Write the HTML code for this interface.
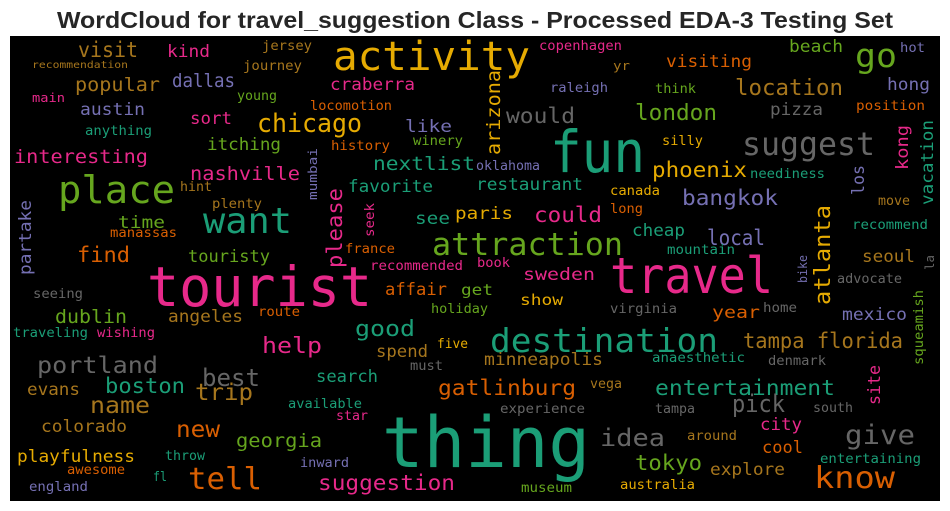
<!DOCTYPE html>
<html><head><meta charset="utf-8"><style>
html,body{margin:0;padding:0;background:#fff;width:950px;height:511px;overflow:hidden}
svg{display:block}
.w{font-family:"DejaVu Sans Mono","Liberation Mono",monospace}
.T{fill:#1b9e77}.O{fill:#d95f02}.P{fill:#7570b3}.K{fill:#e7298a}.G{fill:#66a61e}.Y{fill:#e6ab02}.B{fill:#a6761d}.A{fill:#666666}
</style></head><body>
<svg width="950" height="511" viewBox="0 0 950 511" xmlns="http://www.w3.org/2000/svg">
<text x="475" y="28" text-anchor="middle" font-family="Liberation Sans, sans-serif" font-weight="bold" font-size="23" fill="#262626" textLength="836" lengthAdjust="spacingAndGlyphs">WordCloud for travel_suggestion Class - Processed EDA-3 Testing Set</text>
<rect x="10" y="36" width="930" height="465" fill="#000"/>
<g class="w">
<text class="Y" x="333" y="70" font-size="40" textLength="197" lengthAdjust="spacingAndGlyphs">activity</text>
<text class="T" x="550" y="172" font-size="58" textLength="95" lengthAdjust="spacingAndGlyphs">fun</text>
<text class="T" x="382" y="467" font-size="70" textLength="208" lengthAdjust="spacingAndGlyphs">thing</text>
<text class="K" x="147" y="306" font-size="55" textLength="225" lengthAdjust="spacingAndGlyphs">tourist</text>
<text class="K" x="610" y="293" font-size="50" textLength="163" lengthAdjust="spacingAndGlyphs">travel</text>
<text class="G" x="58" y="203" font-size="38" textLength="117" lengthAdjust="spacingAndGlyphs">place</text>
<text class="T" x="203" y="233" font-size="36" textLength="89" lengthAdjust="spacingAndGlyphs">want</text>
<text class="T" x="490" y="352" font-size="33" textLength="228" lengthAdjust="spacingAndGlyphs">destination</text>
<text class="G" x="432" y="255" font-size="31" textLength="191" lengthAdjust="spacingAndGlyphs">attraction</text>
<text class="A" x="742" y="155" font-size="32" textLength="133" lengthAdjust="spacingAndGlyphs">suggest</text>
<text class="G" x="855" y="67" font-size="33" textLength="42" lengthAdjust="spacingAndGlyphs">go</text>
<text class="O" x="814" y="488" font-size="30" textLength="81" lengthAdjust="spacingAndGlyphs">know</text>
<text class="O" x="188" y="489" font-size="30" textLength="74" lengthAdjust="spacingAndGlyphs">tell</text>
<text class="A" x="845" y="444" font-size="27" textLength="70" lengthAdjust="spacingAndGlyphs">give</text>
<text class="A" x="600" y="446" font-size="24" textLength="65" lengthAdjust="spacingAndGlyphs">idea</text>
<text class="Y" x="257" y="132" font-size="26" textLength="105" lengthAdjust="spacingAndGlyphs">chicago</text>
<text class="B" x="735" y="95" font-size="22" textLength="108" lengthAdjust="spacingAndGlyphs">location</text>
<text class="G" x="635" y="120" font-size="22" textLength="82" lengthAdjust="spacingAndGlyphs">london</text>
<text class="Y" x="652" y="177" font-size="21" textLength="95" lengthAdjust="spacingAndGlyphs">phoenix</text>
<text class="P" x="682" y="205" font-size="21" textLength="96" lengthAdjust="spacingAndGlyphs">bangkok</text>
<text class="K" x="534" y="222" font-size="21" textLength="68" lengthAdjust="spacingAndGlyphs">could</text>
<text class="P" x="707" y="245" font-size="21" textLength="58" lengthAdjust="spacingAndGlyphs">local</text>
<text class="T" x="632" y="236" font-size="17" textLength="53" lengthAdjust="spacingAndGlyphs">cheap</text>
<text class="A" x="506" y="123" font-size="21" textLength="69" lengthAdjust="spacingAndGlyphs">would</text>
<text class="O" x="666" y="67" font-size="17" textLength="86" lengthAdjust="spacingAndGlyphs">visiting</text>
<text class="G" x="789" y="52" font-size="17" textLength="54" lengthAdjust="spacingAndGlyphs">beach</text>
<text class="P" x="900" y="52" font-size="13" textLength="25" lengthAdjust="spacingAndGlyphs">hot</text>
<text class="K" x="539" y="50" font-size="13" textLength="83" lengthAdjust="spacingAndGlyphs">copenhagen</text>
<text class="B" x="613" y="70" font-size="12" textLength="17" lengthAdjust="spacingAndGlyphs">yr</text>
<text class="P" x="550" y="92" font-size="13" textLength="58" lengthAdjust="spacingAndGlyphs">raleigh</text>
<text class="G" x="655" y="93" font-size="13" textLength="41" lengthAdjust="spacingAndGlyphs">think</text>
<text class="P" x="887" y="90" font-size="17" textLength="43" lengthAdjust="spacingAndGlyphs">hong</text>
<text class="A" x="770" y="115" font-size="17" textLength="53" lengthAdjust="spacingAndGlyphs">pizza</text>
<text class="O" x="856" y="110" font-size="13" textLength="69" lengthAdjust="spacingAndGlyphs">position</text>
<text class="Y" x="662" y="145" font-size="13" textLength="41" lengthAdjust="spacingAndGlyphs">silly</text>
<text class="T" x="750" y="178" font-size="13" textLength="75" lengthAdjust="spacingAndGlyphs">neediness</text>
<text class="Y" x="610" y="195" font-size="13" textLength="50" lengthAdjust="spacingAndGlyphs">canada</text>
<text class="O" x="610" y="213" font-size="13" textLength="33" lengthAdjust="spacingAndGlyphs">long</text>
<text class="B" x="878" y="205" font-size="13" textLength="32" lengthAdjust="spacingAndGlyphs">move</text>
<text class="T" x="852" y="229" font-size="13" textLength="76" lengthAdjust="spacingAndGlyphs">recommend</text>
<text class="T" x="667" y="254" font-size="13" textLength="68" lengthAdjust="spacingAndGlyphs">mountain</text>
<text class="P" x="476" y="170" font-size="13" textLength="64" lengthAdjust="spacingAndGlyphs">oklahoma</text>
<text class="T" x="476" y="190" font-size="17" textLength="107" lengthAdjust="spacingAndGlyphs">restaurant</text>
<text class="Y" x="455" y="219" font-size="17" textLength="58" lengthAdjust="spacingAndGlyphs">paris</text>
<text class="B" x="862" y="262" font-size="17" textLength="53" lengthAdjust="spacingAndGlyphs">seoul</text>
<text class="A" x="837" y="283" font-size="13" textLength="65" lengthAdjust="spacingAndGlyphs">advocate</text>
<text class="P" x="842" y="320" font-size="17" textLength="65" lengthAdjust="spacingAndGlyphs">mexico</text>
<text class="A" x="763" y="312" font-size="13" textLength="34" lengthAdjust="spacingAndGlyphs">home</text>
<text class="O" x="712" y="318" font-size="17" textLength="48" lengthAdjust="spacingAndGlyphs">year</text>
<text class="A" x="610" y="313" font-size="13" textLength="67" lengthAdjust="spacingAndGlyphs">virginia</text>
<text class="Y" x="520" y="305" font-size="15" textLength="43" lengthAdjust="spacingAndGlyphs">show</text>
<text class="K" x="523" y="280" font-size="17" textLength="72" lengthAdjust="spacingAndGlyphs">sweden</text>
<text class="K" x="477" y="267" font-size="13" textLength="33" lengthAdjust="spacingAndGlyphs">book</text>
<text class="K" x="370" y="270" font-size="13" textLength="93" lengthAdjust="spacingAndGlyphs">recommended</text>
<text class="G" x="461" y="295" font-size="15" textLength="32" lengthAdjust="spacingAndGlyphs">get</text>
<text class="O" x="385" y="295" font-size="17" textLength="62" lengthAdjust="spacingAndGlyphs">affair</text>
<text class="G" x="431" y="313" font-size="13" textLength="57" lengthAdjust="spacingAndGlyphs">holiday</text>
<text class="B" x="743" y="348" font-size="21" textLength="160" lengthAdjust="spacingAndGlyphs">tampa florida</text>
<text class="B" x="484" y="365" font-size="17" textLength="119" lengthAdjust="spacingAndGlyphs">minneapolis</text>
<text class="T" x="652" y="362" font-size="13" textLength="93" lengthAdjust="spacingAndGlyphs">anaesthetic</text>
<text class="A" x="768" y="365" font-size="13" textLength="58" lengthAdjust="spacingAndGlyphs">denmark</text>
<text class="T" x="655" y="395" font-size="21" textLength="180" lengthAdjust="spacingAndGlyphs">entertainment</text>
<text class="B" x="590" y="388" font-size="13" textLength="32" lengthAdjust="spacingAndGlyphs">vega</text>
<text class="O" x="438" y="395" font-size="21" textLength="138" lengthAdjust="spacingAndGlyphs">gatlinburg</text>
<text class="A" x="500" y="413" font-size="13" textLength="85" lengthAdjust="spacingAndGlyphs">experience</text>
<text class="A" x="655" y="413" font-size="13" textLength="40" lengthAdjust="spacingAndGlyphs">tampa</text>
<text class="A" x="732" y="412" font-size="24" textLength="53" lengthAdjust="spacingAndGlyphs">pick</text>
<text class="A" x="813" y="412" font-size="13" textLength="40" lengthAdjust="spacingAndGlyphs">south</text>
<text class="K" x="760" y="430" font-size="17" textLength="42" lengthAdjust="spacingAndGlyphs">city</text>
<text class="B" x="687" y="440" font-size="13" textLength="50" lengthAdjust="spacingAndGlyphs">around</text>
<text class="O" x="762" y="453" font-size="17" textLength="41" lengthAdjust="spacingAndGlyphs">cool</text>
<text class="G" x="635" y="470" font-size="21" textLength="67" lengthAdjust="spacingAndGlyphs">tokyo</text>
<text class="B" x="710" y="475" font-size="17" textLength="75" lengthAdjust="spacingAndGlyphs">explore</text>
<text class="T" x="820" y="463" font-size="13" textLength="101" lengthAdjust="spacingAndGlyphs">entertaining</text>
<text class="Y" x="620" y="489" font-size="13" textLength="75" lengthAdjust="spacingAndGlyphs">australia</text>
<text class="G" x="521" y="492" font-size="13" textLength="51" lengthAdjust="spacingAndGlyphs">museum</text>

<text class="B" x="78" y="57" font-size="21" textLength="60" lengthAdjust="spacingAndGlyphs">visit</text>
<text class="K" x="167" y="57" font-size="17" textLength="43" lengthAdjust="spacingAndGlyphs">kind</text>
<text class="B" x="262" y="50" font-size="13" textLength="50" lengthAdjust="spacingAndGlyphs">jersey</text>
<text class="B" x="32" y="68" font-size="10" textLength="96" lengthAdjust="spacingAndGlyphs">recommendation</text>
<text class="B" x="243" y="70" font-size="13" textLength="59" lengthAdjust="spacingAndGlyphs">journey</text>
<text class="B" x="75" y="91" font-size="19" textLength="85" lengthAdjust="spacingAndGlyphs">popular</text>
<text class="P" x="172" y="87" font-size="19" textLength="63" lengthAdjust="spacingAndGlyphs">dallas</text>
<text class="K" x="330" y="90" font-size="17" textLength="85" lengthAdjust="spacingAndGlyphs">craberra</text>
<text class="K" x="32" y="102" font-size="12" textLength="33" lengthAdjust="spacingAndGlyphs">main</text>
<text class="G" x="237" y="100" font-size="13" textLength="40" lengthAdjust="spacingAndGlyphs">young</text>
<text class="O" x="310" y="110" font-size="13" textLength="82" lengthAdjust="spacingAndGlyphs">locomotion</text>
<text class="P" x="80" y="115" font-size="17" textLength="65" lengthAdjust="spacingAndGlyphs">austin</text>
<text class="K" x="190" y="124" font-size="17" textLength="42" lengthAdjust="spacingAndGlyphs">sort</text>
<text class="P" x="405" y="132" font-size="17" textLength="47" lengthAdjust="spacingAndGlyphs">like</text>
<text class="T" x="85" y="135" font-size="13" textLength="67" lengthAdjust="spacingAndGlyphs">anything</text>
<text class="G" x="207" y="150" font-size="17" textLength="74" lengthAdjust="spacingAndGlyphs">itching</text>
<text class="O" x="331" y="150" font-size="13" textLength="59" lengthAdjust="spacingAndGlyphs">history</text>
<text class="G" x="413" y="145" font-size="13" textLength="50" lengthAdjust="spacingAndGlyphs">winery</text>
<text class="K" x="14" y="163" font-size="19" textLength="134" lengthAdjust="spacingAndGlyphs">interesting</text>
<text class="T" x="373" y="170" font-size="19" textLength="102" lengthAdjust="spacingAndGlyphs">nextlist</text>
<text class="K" x="190" y="180" font-size="19" textLength="110" lengthAdjust="spacingAndGlyphs">nashville</text>
<text class="B" x="180" y="191" font-size="13" textLength="32" lengthAdjust="spacingAndGlyphs">hint</text>
<text class="T" x="348" y="192" font-size="17" textLength="85" lengthAdjust="spacingAndGlyphs">favorite</text>
<text class="B" x="212" y="208" font-size="13" textLength="50" lengthAdjust="spacingAndGlyphs">plenty</text>
<text class="T" x="415" y="224" font-size="17" textLength="35" lengthAdjust="spacingAndGlyphs">see</text>
<text class="G" x="118" y="228" font-size="17" textLength="47" lengthAdjust="spacingAndGlyphs">time</text>
<text class="O" x="110" y="237" font-size="13" textLength="67" lengthAdjust="spacingAndGlyphs">manassas</text>
<text class="O" x="345" y="253" font-size="13" textLength="50" lengthAdjust="spacingAndGlyphs">france</text>
<text class="O" x="77" y="262" font-size="21" textLength="53" lengthAdjust="spacingAndGlyphs">find</text>
<text class="G" x="188" y="262" font-size="17" textLength="82" lengthAdjust="spacingAndGlyphs">touristy</text>
<text class="A" x="33" y="298" font-size="13" textLength="50" lengthAdjust="spacingAndGlyphs">seeing</text>
<text class="G" x="55" y="323" font-size="19" textLength="72" lengthAdjust="spacingAndGlyphs">dublin</text>
<text class="B" x="168" y="322" font-size="17" textLength="75" lengthAdjust="spacingAndGlyphs">angeles</text>
<text class="O" x="258" y="316" font-size="13" textLength="42" lengthAdjust="spacingAndGlyphs">route</text>
<text class="T" x="13" y="337" font-size="13" textLength="75" lengthAdjust="spacingAndGlyphs">traveling</text>
<text class="K" x="97" y="337" font-size="13" textLength="58" lengthAdjust="spacingAndGlyphs">wishing</text>
<text class="T" x="355" y="336" font-size="22" textLength="60" lengthAdjust="spacingAndGlyphs">good</text>
<text class="K" x="262" y="353" font-size="22" textLength="60" lengthAdjust="spacingAndGlyphs">help</text>
<text class="B" x="376" y="357" font-size="17" textLength="52" lengthAdjust="spacingAndGlyphs">spend</text>
<text class="Y" x="437" y="348" font-size="13" textLength="31" lengthAdjust="spacingAndGlyphs">five</text>
<text class="A" x="37" y="373" font-size="23" textLength="121" lengthAdjust="spacingAndGlyphs">portland</text>
<text class="A" x="410" y="370" font-size="13" textLength="33" lengthAdjust="spacingAndGlyphs">must</text>
<text class="A" x="202" y="386" font-size="24" textLength="58" lengthAdjust="spacingAndGlyphs">best</text>
<text class="T" x="316" y="382" font-size="17" textLength="62" lengthAdjust="spacingAndGlyphs">search</text>
<text class="T" x="105" y="393" font-size="21" textLength="80" lengthAdjust="spacingAndGlyphs">boston</text>
<text class="B" x="27" y="395" font-size="17" textLength="53" lengthAdjust="spacingAndGlyphs">evans</text>
<text class="B" x="195" y="400" font-size="23" textLength="58" lengthAdjust="spacingAndGlyphs">trip</text>
<text class="B" x="90" y="413" font-size="23" textLength="60" lengthAdjust="spacingAndGlyphs">name</text>
<text class="T" x="288" y="408" font-size="13" textLength="74" lengthAdjust="spacingAndGlyphs">available</text>
<text class="K" x="336" y="420" font-size="13" textLength="32" lengthAdjust="spacingAndGlyphs">star</text>
<text class="B" x="41" y="432" font-size="17" textLength="86" lengthAdjust="spacingAndGlyphs">colorado</text>
<text class="O" x="176" y="437" font-size="23" textLength="44" lengthAdjust="spacingAndGlyphs">new</text>
<text class="G" x="236" y="447" font-size="19" textLength="86" lengthAdjust="spacingAndGlyphs">georgia</text>
<text class="Y" x="17" y="462" font-size="17" textLength="118" lengthAdjust="spacingAndGlyphs">playfulness</text>
<text class="T" x="165" y="460" font-size="13" textLength="40" lengthAdjust="spacingAndGlyphs">throw</text>
<text class="P" x="300" y="467" font-size="13" textLength="49" lengthAdjust="spacingAndGlyphs">inward</text>
<text class="O" x="67" y="474" font-size="13" textLength="58" lengthAdjust="spacingAndGlyphs">awesome</text>
<text class="T" x="153" y="481" font-size="13" textLength="14" lengthAdjust="spacingAndGlyphs">fl</text>
<text class="P" x="29" y="491" font-size="13" textLength="59" lengthAdjust="spacingAndGlyphs">england</text>
<text class="K" x="318" y="490" font-size="21" textLength="137" lengthAdjust="spacingAndGlyphs">suggestion</text>

<text class="Y" transform="translate(500,155) rotate(-90)" font-size="19" textLength="85" lengthAdjust="spacingAndGlyphs">arizona</text>
<text class="Y" transform="translate(830,305) rotate(-90)" font-size="22" textLength="100" lengthAdjust="spacingAndGlyphs">atlanta</text>
<text class="K" transform="translate(908,170) rotate(-90)" font-size="17" textLength="45" lengthAdjust="spacingAndGlyphs">kong</text>
<text class="T" transform="translate(933,205) rotate(-90)" font-size="17" textLength="85" lengthAdjust="spacingAndGlyphs">vacation</text>
<text class="P" transform="translate(864,195) rotate(-90)" font-size="17" textLength="30" lengthAdjust="spacingAndGlyphs">los</text>
<text class="A" transform="translate(934,270) rotate(-90)" font-size="12" textLength="15" lengthAdjust="spacingAndGlyphs">la</text>
<text class="P" transform="translate(807,283) rotate(-90)" font-size="12" textLength="28" lengthAdjust="spacingAndGlyphs">bike</text>
<text class="G" transform="translate(923,365) rotate(-90)" font-size="13" textLength="75" lengthAdjust="spacingAndGlyphs">squeamish</text>
<text class="K" transform="translate(880,405) rotate(-90)" font-size="17" textLength="40" lengthAdjust="spacingAndGlyphs">site</text>
<text class="P" transform="translate(317,200) rotate(-90)" font-size="12" textLength="52" lengthAdjust="spacingAndGlyphs">mumbai</text>
<text class="K" transform="translate(342,268) rotate(-90)" font-size="21" textLength="80" lengthAdjust="spacingAndGlyphs">please</text>
<text class="K" transform="translate(374,237) rotate(-90)" font-size="13" textLength="34" lengthAdjust="spacingAndGlyphs">seek</text>
<text class="P" transform="translate(31,275) rotate(-90)" font-size="17" textLength="75" lengthAdjust="spacingAndGlyphs">partake</text>
</g>
</svg>
</body></html>
